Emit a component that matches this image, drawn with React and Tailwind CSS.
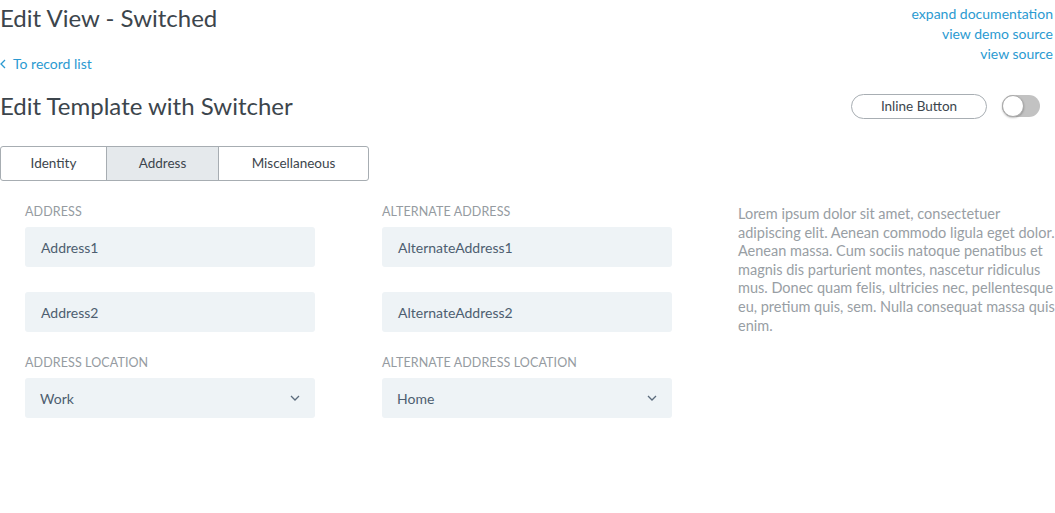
import React from "react";

const font = { fontFamily: "Lato, 'Open Sans', sans-serif" };

function Input({ value }) {
  return (
    <div className="h-10 w-[290px] rounded-[3px] bg-[#eef3f6] flex items-center pl-4 text-[14px] text-[#4d5e70]">
      {value}
    </div>
  );
}

function Select({ value }) {
  return (
    <div className="h-10 w-[290px] rounded-[3px] bg-[#eef3f6] flex items-center justify-between pl-[15px] pr-[15px] text-[14px] text-[#4d5e70]">
      <span>{value}</span>
      <svg width="10" height="6" viewBox="0 0 10 6" fill="none">
        <path d="M1 1l4 4 4-4" stroke="#5b6b7c" strokeWidth="1.3" />
      </svg>
    </div>
  );
}

function Label({ children }) {
  return <div className="text-[12.5px] uppercase text-[#959ba1] leading-4 mb-[7px] tracking-[0.1px]">{children}</div>;
}

export default function App() {
  return (
    <div className="w-[1055px] h-[513px] bg-white relative" style={font}>
      <div className="flex justify-between">
        <div>
          <h1 className="text-[24px] leading-[36px] text-[#3c454c] font-normal">Edit View - Switched</h1>
          <div className="mt-[20px] flex items-center gap-[7px] text-[14px] text-[#2b9ad1] leading-4">
            <svg width="6" height="10" viewBox="0 0 6 10" fill="none">
              <path d="M5 1L1 5l4 4" stroke="#2b9ad1" strokeWidth="1.3" />
            </svg>
            <span>To record list</span>
          </div>
        </div>
        <div className="flex flex-col items-end pr-[2px] pt-[4px] text-[14px] leading-5 text-[#2b9ad1]">
          <span>expand documentation</span>
          <span>view demo source</span>
          <span>view source</span>
        </div>
      </div>

      <div className="flex items-center justify-between mt-[20px] h-[28px]">
        <h2 className="text-[24px] text-[#3c454c] font-normal">Edit Template with Switcher</h2>
        <div className="flex items-center gap-[15px] pr-[15px]">
          <button className="w-[136px] h-[25px] rounded-full border border-[#a8aeb3] text-[13.5px] text-[#3c454c] bg-white">
            Inline Button
          </button>
          <div className="relative w-[38px] h-[22px] rounded-full bg-[#c2c2c2]">
            <div className="absolute left-0 top-0 w-[22px] h-[22px] rounded-full bg-white border border-[#a9a9a9] shadow-[0_1px_2px_rgba(0,0,0,0.25)]" />
          </div>
        </div>
      </div>

      <div className="mt-[26px] flex w-[369px] h-[35px] border border-[#a7adb2] rounded-[3px] text-[13.5px] text-[#3c454c]">
        <div className="w-[105px] flex items-center justify-center">Identity</div>
        <div className="w-[113px] flex items-center justify-center bg-[#e5e9ec] border-l border-r border-[#a7adb2]">Address</div>
        <div className="flex-1 flex items-center justify-center">Miscellaneous</div>
      </div>

      <div className="flex mt-[23px] pl-[25px]">
        <div className="w-[290px]">
          <Label>Address</Label>
          <Input value="Address1" />
          <div className="mt-[25px]"><Input value="Address2" /></div>
          <div className="mt-[23px]"><Label>Address Location</Label></div>
          <Select value="Work" />
        </div>
        <div className="w-[290px] ml-[67px]">
          <Label>Alternate Address</Label>
          <Input value="AlternateAddress1" />
          <div className="mt-[25px]"><Input value="AlternateAddress2" /></div>
          <div className="mt-[23px]"><Label>Alternate Address Location</Label></div>
          <Select value="Home" />
        </div>
        <div className="ml-[66px] w-[317px] pt-[1px] text-[14.5px] leading-[18.6px] text-[#989ea4]">
          Lorem ipsum dolor sit amet, consectetuer adipiscing elit. Aenean commodo ligula eget dolor. Aenean massa. Cum sociis natoque penatibus et magnis dis parturient montes, nascetur ridiculus mus. Donec quam felis, ultricies nec, pellentesque eu, pretium quis, sem. Nulla consequat massa quis enim.
        </div>
      </div>
    </div>
  );
}
